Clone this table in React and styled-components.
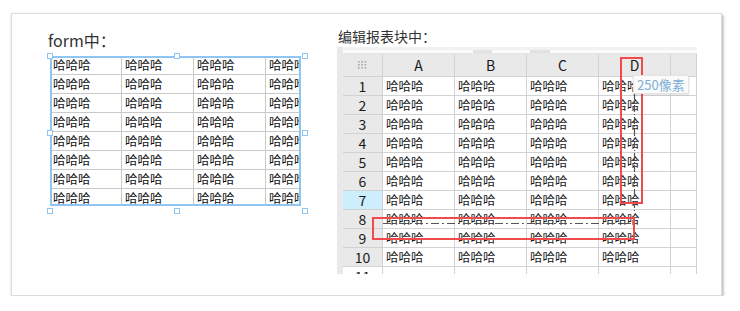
import React from "react";
import styled, { createGlobalStyle } from "styled-components";

const GlobalStyle = createGlobalStyle`
  body {
    margin: 0;
    background: #fff;
    font-family: "Noto Sans CJK SC", "Liberation Sans", sans-serif;
  }
`;

const Card = styled.div`
  margin: 13px 0 0 11px;
  width: 711px;
  height: 283px;
  box-sizing: border-box;
  border: 1px solid #dcdcdc;
  box-shadow: 1px 2px 3px rgba(0, 0, 0, 0.35);
  display: flex;
  background: #fff;
`;

const Left = styled.div`
  width: 325px;
  padding: 16px 0 0 35px;
  box-sizing: border-box;
`;

const Right = styled.div`
  padding-top: 12px;
`;

const Title = styled.div`
  font-size: ${(p) => p.$size}px;
  line-height: 20px;
  color: #333;
  margin-left: 1px;
`;

const Selection = styled.div`
  position: relative;
  margin-top: 3px;
  padding: 3px;
  width: 251px;
  height: 150px;
`;

const FormTable = styled.div`
  width: 251px;
  height: 150px;
  overflow: hidden;
  display: grid;
  grid-template-columns: repeat(4, 72px);
  grid-auto-rows: 19px;
`;

const FormCell = styled.div`
  box-sizing: border-box;
  border-right: 1px solid #c9c9c9;
  border-bottom: 1px solid #c9c9c9;
  padding-left: 3px;
  font-size: 12.5px;
  line-height: 18px;
  color: #111;
  white-space: nowrap;
  overflow: hidden;
`;

const Frame = styled.div`
  position: absolute;
  left: 3px;
  top: 3px;
  width: 251px;
  height: 150px;
  box-sizing: border-box;
  border: 2px solid #8ec5f3;
  pointer-events: none;
`;

const Handle = styled.div`
  position: absolute;
  left: ${(p) => p.$x}px;
  top: ${(p) => p.$y}px;
  width: 6px;
  height: 6px;
  box-sizing: border-box;
  border: 1px solid #8ec5f3;
  background: #fff;
`;

const Sheet = styled.div`
  position: relative;
  margin-top: 1px;
  width: 360px;
  height: 227px;
  overflow: hidden;
  background: #fff;
  border-left: 6px solid #e9e9e9;
  box-sizing: border-box;
`;

const TopStrip = styled.div`
  height: 7px;
  box-sizing: border-box;
  border-top: 3px solid #f2f2f2;
  border-bottom: 1px solid #e6e6e6;
  background: #fafafa;
  display: flex;
`;

const Thumb = styled.div`
  margin-left: ${(p) => p.$left}px;
  width: ${(p) => p.$w}px;
  height: 3px;
  background: #e2e2e2;
`;

const Grid = styled.div`
  display: grid;
  grid-template-columns: 40px 72px 72px 72px 72px 26px;
  grid-template-rows: 23px;
  grid-auto-rows: 19px;
`;

const Cell = styled.div`
  box-sizing: border-box;
  border-right: 1px solid #d2d2d2;
  border-bottom: 1px solid #d2d2d2;
  background: ${(p) => (p.$active ? "#cdeefc" : p.$head ? "#e9e9e9" : "#fff")};
  color: #1a1a1a;
  font-size: ${(p) => (p.$head ? 14 : 12.5)}px;
  line-height: ${(p) => (p.$tall ? 22 : 18)}px;
  padding-left: ${(p) => (p.$head ? 0 : 3)}px;
  white-space: nowrap;
  overflow: hidden;
  display: flex;
  align-items: center;
  justify-content: ${(p) => (p.$head ? "center" : "flex-start")};
`;

const RedBox = styled.div`
  position: absolute;
  left: ${(p) => p.$x}px;
  top: ${(p) => p.$y}px;
  width: ${(p) => p.$w}px;
  height: ${(p) => p.$h}px;
  box-sizing: border-box;
  border: 2px solid #f04a4a;
`;

const Guide = styled.svg`
  position: absolute;
  left: ${(p) => p.$x}px;
  top: ${(p) => p.$y}px;
`;

const Tip = styled.div`
  position: absolute;
  left: 290px;
  top: 28px;
  height: 17px;
  padding: 0 3px;
  background: #fbfbfb;
  border: 1px solid #e4e4e4;
  box-shadow: 0 1px 2px rgba(0, 0, 0, 0.12);
  font-size: 13px;
  line-height: 17px;
  color: #7db0d6;
`;

function DragDots() {
  return (
    <svg width="9" height="8" viewBox="0 0 9 8">
      {[0, 1, 2].map((r) =>
        [0, 1, 2].map((c) => (
          <rect key={r + "-" + c} x={c * 3.3} y={r * 3} width="1.6" height="1.6" fill="#a8a8a8" />
        ))
      )}
    </svg>
  );
}

const word = "哈哈哈";
const cols = ["A", "B", "C", "D"];
const rows = [1, 2, 3, 4, 5, 6, 7, 8, 9, 10];

export default function App() {
  const handles = [
    [0, 0], [127, 0], [255, 0],
    [0, 77], [255, 77],
    [0, 155], [127, 155], [255, 155],
  ];
  return (
    <>
      <GlobalStyle />
      <Card>
        <Left>
          <Title $size={16}>form中：</Title>
          <Selection>
            <FormTable>
              {Array.from({ length: 32 }).map((_, i) => (
                <FormCell key={i}>{word}</FormCell>
              ))}
            </FormTable>
            <Frame />
            {handles.map(([x, y], i) => (
              <Handle key={i} $x={x} $y={y} />
            ))}
          </Selection>
        </Left>
        <Right>
          <Title $size={14}>编辑报表块中：</Title>
          <Sheet>
            <TopStrip>
              <Thumb $left={130} $w={19} />
              <Thumb $left={38} $w={20} />
            </TopStrip>
            <Grid>
              <Cell $head $tall><DragDots /></Cell>
              {cols.map((c) => (
                <Cell key={c} $head $tall>{c}</Cell>
              ))}
              <Cell $head $tall />
              {rows.map((r) => (
                <React.Fragment key={r}>
                  <Cell $head $active={r === 7}>{r}</Cell>
                  {cols.map((c) => (
                    <Cell key={c}>{word}</Cell>
                  ))}
                  <Cell />
                </React.Fragment>
              ))}
              <Cell $head style={{ background: "#fff" }}>11</Cell>
              {cols.map((c) => (
                <Cell key={c} />
              ))}
              <Cell />
            </Grid>
            <Guide $x={290} $y={46} width="3" height="120">
              <line x1="1.5" y1="0" x2="1.5" y2="120" stroke="#555" strokeWidth="1.2" strokeDasharray="7 2 1 2" />
            </Guide>
            <Guide $x={40} $y={175} width="250" height="3">
              <line x1="0" y1="1.5" x2="250" y2="1.5" stroke="#555" strokeWidth="1.2" strokeDasharray="8 3 2 3" />
            </Guide>
            <RedBox $x={277} $y={10} $w={23} $h={147} />
            <RedBox $x={29} $y={170} $w={263} $h={23} />
            <Tip>250像素</Tip>
          </Sheet>
        </Right>
      </Card>
    </>
  );
}
